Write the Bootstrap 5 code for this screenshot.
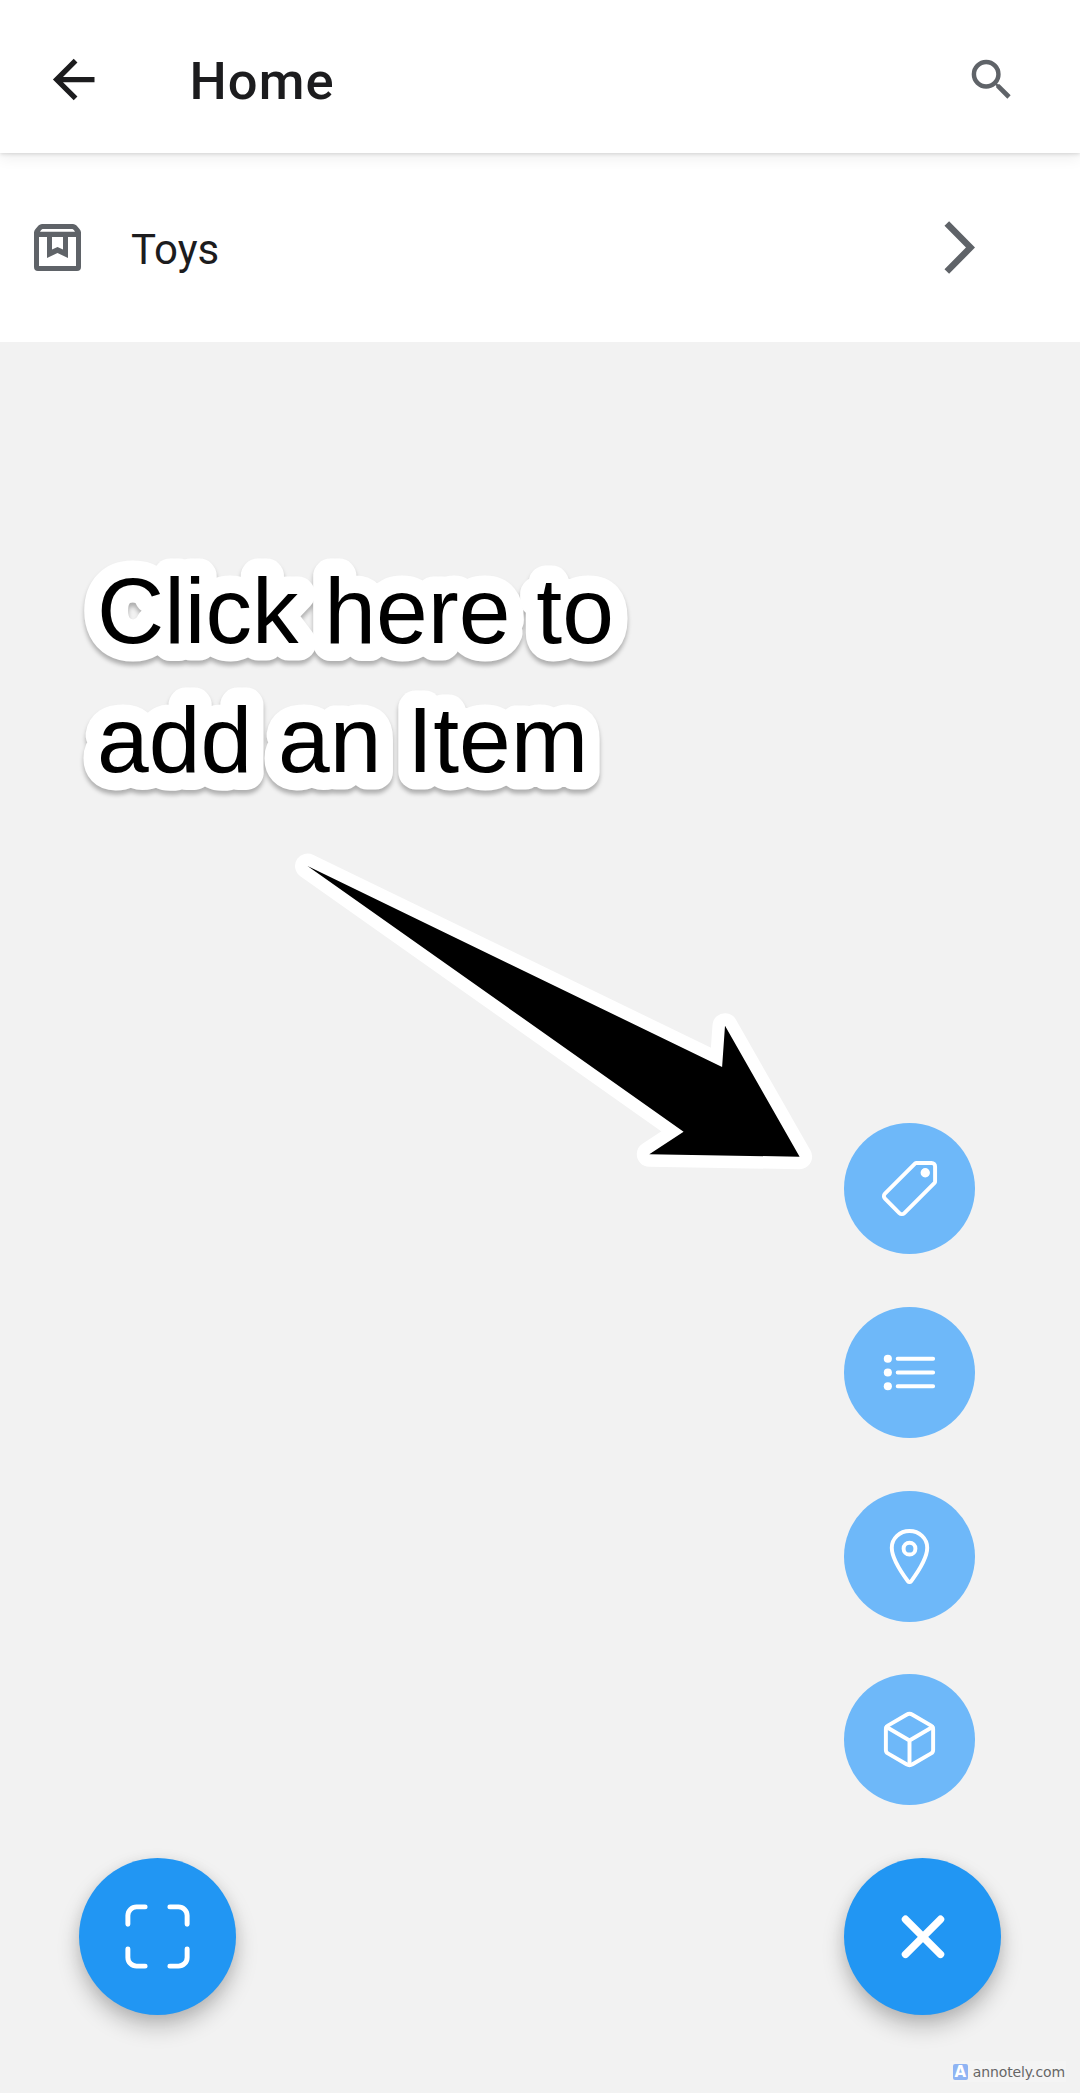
<!DOCTYPE html>
<html lang="en">
<head>
<meta charset="utf-8">
<meta name="viewport" content="width=device-width, initial-scale=1">
<title>Home</title>
<link href="https://cdn.jsdelivr.net/npm/bootstrap@5.3.0/dist/css/bootstrap.min.css" rel="stylesheet">
<style>
body{background:#f2f2f2;font-family:Roboto,sans-serif;color:#1c1c1e}
svg{display:block;flex:none}
.screen{height:2093px;overflow:hidden}
.app-bar{height:153px;padding:6px 62px 0 42px;z-index:2;box-shadow:0 1px 4px rgba(0,0,0,.14),0 6px 13px rgba(0,0,0,.06)}
.app-title{font-size:52.5px;font-weight:500;line-height:62px;letter-spacing:1.1px;margin:3px 0 0 84.500px}
.app-bar .bi-search{color:#5f6368}
.item-row{height:189px;padding:0 105px 0 34px;font-size:42px;color:#1c1c1e}
.item-row svg{color:#5f6368}
.item-name{margin:4px 0 0 50px;line-height:50px}
.actions{padding:0 79px 78px}
.fab-stack{gap:52.7px}
.fab{border:0;padding:0;display:flex;align-items:center;justify-content:center;border-radius:50%;color:#fff;width:131px;height:131px;background:#6eb8f9}
.fab-main{width:157px;height:157px;background:#2196f3;box-shadow:0 12px 22px rgba(0,0,0,.22),0 3px 14px rgba(0,0,0,.08)}
.line{fill:none;stroke:currentColor;stroke-width:32;stroke-linecap:round;stroke-linejoin:round}
.notes{z-index:3;pointer-events:none}
.notes text{font-family:"Liberation Sans",Arial,sans-serif;font-size:93px;fill:#000;stroke:#fff;stroke-width:35px;stroke-linejoin:round;paint-order:stroke}
.note-text{filter:drop-shadow(0 4px 2px rgba(0,0,0,.28))}
.credit{right:14px;bottom:11px;height:21px;padding:0 1px 0 3px;background:#f4f4f4;font:14px/20px "DejaVu Sans",sans-serif;color:#666;letter-spacing:-.1px;z-index:4}
.credit-logo{width:15px;height:16px;margin-right:5px;background:#8fb4f3;color:#fff;border-radius:2px;font:bold 15px/16px "DejaVu Sans",sans-serif;text-align:center}
</style>
</head>
<body>
<div class="screen position-relative d-flex flex-column">
  <header class="app-bar bg-white position-relative d-flex align-items-center">
    <svg width="63" height="63" viewBox="0 0 24 24" fill="currentColor"><path d="M20 11V13H8L13.5 18.5L12.08 19.92L4.16 12L12.08 4.08L13.5 5.5L8 11H20Z"/></svg>
    <h1 class="app-title mb-0">Home</h1>
    <svg class="bi-search ms-auto" width="53.5" height="53.5" viewBox="0 0 24 24" fill="currentColor"><path d="M15.5 14h-.79l-.28-.27A6.471 6.471 0 0 0 16 9.5 6.5 6.5 0 1 0 9.5 16c1.61 0 3.09-.59 4.23-1.57l.27.28v.79l5 4.99L20.49 19l-4.99-5zm-6 0C7.01 14 5 11.99 5 9.5S7.01 5 9.5 5 14 7.01 14 9.5 11.99 14 9.5 14z"/></svg>
  </header>
  <a class="item-row bg-white d-flex align-items-center text-decoration-none" href="#">
    <svg width="47" height="47" viewBox="0 0 47 47" fill="currentColor" fill-rule="evenodd"><path d="M8 0H39Q41 0 42.500 1.500L45.500 5Q47 6.500 47 8.500V43Q47 47 43 47H4Q0 47 0 43V8.500Q0 6.500 1.500 5L4.500 1.500Q6 0 8 0ZM8.500 5Q7 5.500 6 7.700H41Q40 5.500 38.500 5ZM5 13V42H42V13H34V34L23.500 29L13 34V13ZM18 13V25.500L23.500 23L29 25.500V13Z"/></svg>
    <span class="item-name">Toys</span>
    <svg class="ms-auto" width="31" height="53" viewBox="0 0 31 53" fill="none" stroke="currentColor" stroke-width="6.500"><path d="M2.800 2.500L26.500 26.500L2.800 50.500"/></svg>
  </a>
  <main class="actions flex-grow-1 d-flex justify-content-between align-items-end">
    <button class="fab fab-main" aria-label="Scan"><svg width="79" height="79" viewBox="0 0 512 512"><path class="line" d="M336 448h56a56 56 0 0 0 56-56v-56M448 176v-56a56 56 0 0 0-56-56h-56M176 448h-56a56 56 0 0 1-56-56v-56M64 176v-56a56 56 0 0 1 56-56h56"/></svg></button>
    <div class="fab-stack d-flex flex-column">
      <button class="fab" aria-label="Item"><svg width="63" height="63" viewBox="0 0 512 512"><path class="line" d="M435.250 48h-122.900a14.460 14.460 0 0 0-10.200 4.200L56.450 297.900a28.850 28.850 0 0 0 0 40.700l117 117a28.850 28.850 0 0 0 40.700 0L459.750 210a14.460 14.460 0 0 0 4.200-10.200v-123a28.660 28.660 0 0 0-28.700-28.800z"/><circle cx="384" cy="128" r="32" fill="currentColor" stroke="currentColor" stroke-width="12"/></svg></button>
      <button class="fab" aria-label="List"><svg width="63" height="63" viewBox="0 0 512 512"><path class="line" d="M160 144H448M160 256H448M160 368H448"/><g fill="currentColor"><circle cx="80" cy="144" r="33"/><circle cx="80" cy="256" r="33"/><circle cx="80" cy="368" r="33"/></g></svg></button>
      <button class="fab" aria-label="Location"><svg width="63" height="63" viewBox="0 0 512 512"><path class="line" d="M256 48c-79.500 0-144 61.390-144 137 0 87 96 224.870 131.250 272.490a15.770 15.770 0 0 0 25.500 0C304 409.890 400 272.070 400 185c0-75.610-64.500-137-144-137z"/><circle class="line" cx="256" cy="192" r="48"/></svg></button>
      <button class="fab" aria-label="Box"><svg width="63" height="63" viewBox="0 0 512 512"><path class="line" d="M448 341.370V170.610A32 32 0 0 0 432.110 143l-152-88.460a47.940 47.940 0 0 0-48.240 0L79.890 143A32 32 0 0 0 64 170.610v170.760A32 32 0 0 0 79.890 369l152 88.460a48 48 0 0 0 48.240 0l152-88.460A32 32 0 0 0 448 341.370z"/><path class="line" d="M69 153.990l187 110 187-110M256 463.990v-200"/></svg></button>
      <button class="fab fab-main" aria-label="Close"><svg width="44" height="44" viewBox="-22 -22 44 44" fill="none" stroke="currentColor" stroke-width="7.500" stroke-linecap="round"><path d="M-17.500-17.700L17.500 17.300M17.500-17.700L-17.500 17.300"/></svg></button>
    </div>
  </main>
  <!-- Callout drawn over the screen -->
  <svg class="notes position-absolute top-0 start-0" width="1080" height="2093" viewBox="0 0 1080 2093">
    <g class="note-text"><text x="97" y="643">Click here to</text><text x="97" y="772">add an Item</text></g>
    <path d="M307.500 866L722.100 1067L725 1025.700L799.600 1156.700L649.300 1154.300L683.600 1131.700Z" fill="#000" stroke="#fff" stroke-width="25" stroke-linejoin="round" paint-order="stroke"/>
  </svg>
  <div class="credit position-absolute d-flex align-items-center"><span class="credit-logo">A</span>annotely.com</div>
</div>
<script src="https://cdn.jsdelivr.net/npm/bootstrap@5.3.0/dist/js/bootstrap.bundle.min.js"></script>
</body>
</html>
